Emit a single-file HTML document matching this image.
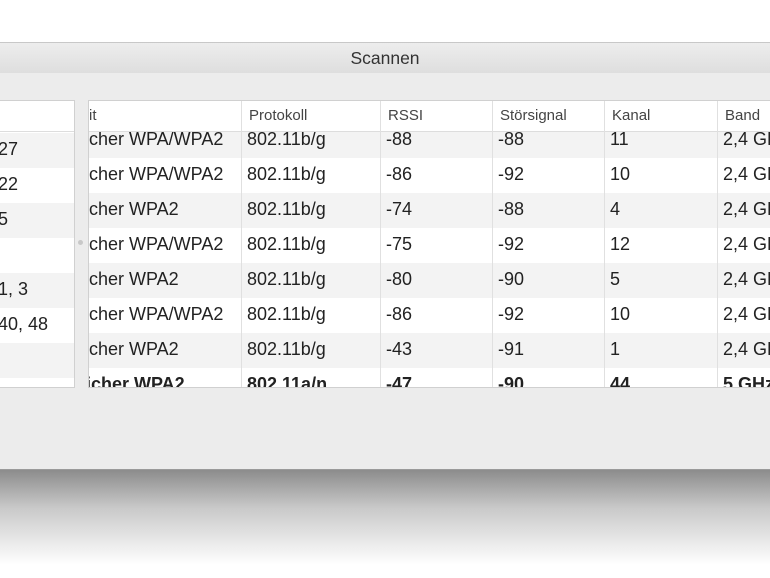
<!DOCTYPE html><html><head><style>
body{margin:0;width:770px;height:578px;overflow:hidden;background:#fff;font-family:"Liberation Sans",sans-serif;position:relative}
.tb{position:absolute;left:0;top:42px;width:770px;height:30px;background:linear-gradient(#ededed,#dedede);border-top:1px solid #c8c8c8;border-bottom:1px solid #bdbdbd;text-align:center;line-height:31px;font-size:17.5px;color:#333}
.win{position:absolute;left:0;top:73px;width:770px;height:396px;background:#ececec;border-bottom:1px solid #9a9a9a}
.sh{position:absolute;left:0;top:470px;width:770px;height:95px;background:linear-gradient(#8c8c8c,#c9c9c9 40%,#fff)}
.t{position:absolute;top:100px;height:288px;background:#fff;overflow:hidden;border:1px solid #d0d0d0;box-sizing:border-box}
.h{position:absolute;left:0;right:0;top:0;height:30px;background:#fff;border-bottom:1px solid #ddd;z-index:2;font-size:15px;color:#444;white-space:nowrap}
.h span{position:absolute;top:6px}
.r{position:absolute;left:0;right:0;height:35px;font-size:18px;color:#222;white-space:nowrap}
.r span{position:absolute;top:6px}
.g{background:#f3f3f3}
.v{position:absolute;top:0;bottom:0;width:1px;background:#e0e0e0;z-index:3}
</style></head><body>
<div class="tb">Scannen</div>
<div class="win"></div>
<div class="sh"></div>
<div class="t" style="left:-2px;width:77px">
<div class="h"></div>
<div class="r g" style="top:32px"><span style="left:-1px">27</span></div>
<div class="r" style="top:67px"><span style="left:-1px">22</span></div>
<div class="r g" style="top:102px"><span style="left:-1px">5</span></div>
<div class="r" style="top:137px"><span style="left:-1px"></span></div>
<div class="r g" style="top:172px"><span style="left:-1px">1, 3</span></div>
<div class="r" style="top:207px"><span style="left:-1px">40, 48</span></div>
<div class="r g" style="top:242px"></div>
</div>
<div style="position:absolute;left:78px;top:240px;width:5px;height:5px;border-radius:50%;background:#c8c8c8"></div>
<div class="t" style="left:88px;width:690px">
<div class="h"><span style="left:0">it</span><span style="left:160px">Protokoll</span><span style="left:299px">RSSI</span><span style="left:411px">Störsignal</span><span style="left:523px">Kanal</span><span style="left:636px">Band</span></div>
<div class="v" style="left:152px"></div><div class="v" style="left:291px"></div><div class="v" style="left:403px"></div><div class="v" style="left:515px"></div><div class="v" style="left:628px"></div>
<div class="r g" style="top:22px"><span style="left:0">cher WPA/WPA2</span><span style="left:158px">802.11b/g</span><span style="left:297px">-88</span><span style="left:409px">-88</span><span style="left:521px">11</span><span style="left:634px">2,4 GHz</span></div>
<div class="r" style="top:57px"><span style="left:0">cher WPA/WPA2</span><span style="left:158px">802.11b/g</span><span style="left:297px">-86</span><span style="left:409px">-92</span><span style="left:521px">10</span><span style="left:634px">2,4 GHz</span></div>
<div class="r g" style="top:92px"><span style="left:0">cher WPA2</span><span style="left:158px">802.11b/g</span><span style="left:297px">-74</span><span style="left:409px">-88</span><span style="left:521px">4</span><span style="left:634px">2,4 GHz</span></div>
<div class="r" style="top:127px"><span style="left:0">cher WPA/WPA2</span><span style="left:158px">802.11b/g</span><span style="left:297px">-75</span><span style="left:409px">-92</span><span style="left:521px">12</span><span style="left:634px">2,4 GHz</span></div>
<div class="r g" style="top:162px"><span style="left:0">cher WPA2</span><span style="left:158px">802.11b/g</span><span style="left:297px">-80</span><span style="left:409px">-90</span><span style="left:521px">5</span><span style="left:634px">2,4 GHz</span></div>
<div class="r" style="top:197px"><span style="left:0">cher WPA/WPA2</span><span style="left:158px">802.11b/g</span><span style="left:297px">-86</span><span style="left:409px">-92</span><span style="left:521px">10</span><span style="left:634px">2,4 GHz</span></div>
<div class="r g" style="top:232px"><span style="left:0">cher WPA2</span><span style="left:158px">802.11b/g</span><span style="left:297px">-43</span><span style="left:409px">-91</span><span style="left:521px">1</span><span style="left:634px">2,4 GHz</span></div>
<div class="r" style="top:267px;font-weight:bold"><span style="left:-3px">icher WPA2</span><span style="left:158px">802.11a/n</span><span style="left:297px">-47</span><span style="left:409px">-90</span><span style="left:521px">44</span><span style="left:634px">5 GHz</span></div>
</div>
</body></html>
